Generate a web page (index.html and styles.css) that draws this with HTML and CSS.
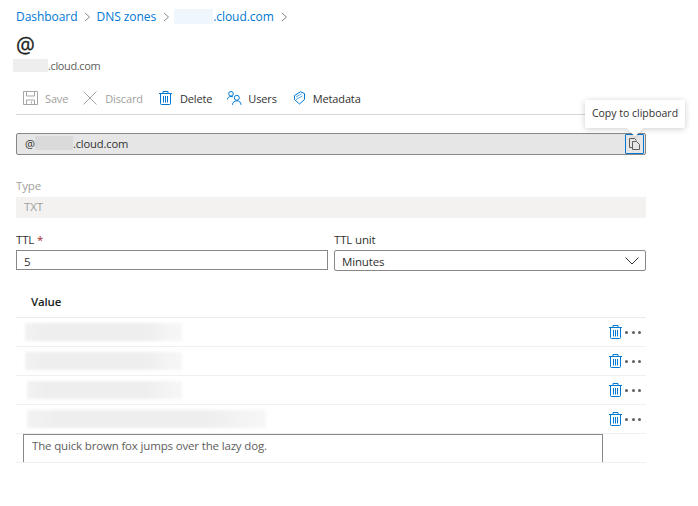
FILE: index.html
```html
<!DOCTYPE html>
<html lang="en">
<head>
<meta charset="utf-8">
<title>DNS record</title>
<link rel="stylesheet" href="styles.css">
</head>
<body>
<svg class="defs" width="0" height="0" aria-hidden="true">
  <symbol id="trash" viewBox="0 0 13 14">
    <path d="M0 2.500h13M4 2.500V.5h5v2M1.500 2.500v10a1 1 0 0 0 1 1h8a1 1 0 0 0 1-1v-10" fill="none" stroke="#0078d4" stroke-width="1"/>
    <path d="M4.500 5v6.500M6.500 5v6.500M8.500 5v6.500" fill="none" stroke="#0078d4" stroke-width="1"/>
  </symbol>
</svg>
<main class="page">
  <nav class="crumbs">
    <a>Dashboard</a><span class="chev"><svg width="7" height="10" viewBox="0 0 7 10"><path d="M1 1l4.500 4L1 9" fill="none" stroke="#8a8886"/></svg></span>
    <a>DNS zones</a><span class="chev"><svg width="7" height="10" viewBox="0 0 7 10"><path d="M1 1l4.500 4L1 9" fill="none" stroke="#8a8886"/></svg></span>
    <a class="zone"><span class="mask mask-blue"></span>.cloud.com</a><span class="chev"><svg width="7" height="10" viewBox="0 0 7 10"><path d="M1 1l4.500 4L1 9" fill="none" stroke="#8a8886"/></svg></span>
  </nav>
  <h1 class="title">@</h1>
  <div class="subtitle"><span class="mask mask-grey"></span>.cloud.com</div>

  <div class="toolbar">
    <span class="tool off save">
      <svg width="15" height="14" viewBox="0 0 15 14"><path d="M.5.5h14v13H.5zM3.500.5v4.500h8V.5M3.500 13.500V9h8v4.500M8.500 10.500v2" fill="none" stroke="#a8a6a4"/></svg>
      Save</span>
    <span class="tool off discard">
      <svg width="14" height="14" viewBox="0 0 14 14"><path d="M.5.5l13 13M13.500.5l-13 13" fill="none" stroke="#a8a6a4"/></svg>
      Discard</span>
    <span class="tool delete"><svg class="trash" width="13" height="14"><use href="#trash"/></svg>Delete</span>
    <span class="tool users">
      <svg width="15" height="14" viewBox="0 0 15 14"><g fill="none" stroke="#0078d4"><circle cx="4" cy="2.800" r="2.300"/><path d="M.5 8.500c0-2 1.500-3 3.500-3 .8 0 1.500.1 2 .4"/><circle cx="9.800" cy="6.800" r="2.500"/><path d="M5.500 13.800c0-2.500 2-4 4.300-4s4.300 1.500 4.300 4"/></g></svg>
      Users</span>
    <span class="tool meta">
      <svg width="11" height="14" viewBox="0 0 11 14"><g fill="none" stroke="#0078d4"><path d="M.5 4.500L6.500.8l4 1.700v6L5.500 13 .5 8.500z"/><path d="M2 6l5.500-3.200M2 8.500l6.500-3.700" stroke="#5ca9e4"/></g></svg>
      Metadata</span>
  </div>

  <div class="copy-field">
    <span class="copy-text">@<span class="mask mask-field"></span>.cloud.com</span>
    <span class="copy-btn">
      <svg width="11" height="12" viewBox="0 0 11 12"><path d="M3.500 9.500h-3V.5h5l2 2M3.500 3.500h4l3 3v5h-7z" fill="none" stroke="#605e5c"/></svg>
    </span>
    <div class="tooltip">Copy to clipboard</div>
  </div>

  <div class="type-label">Type</div>
  <div class="type-box">TXT</div>

  <div class="ttl-grid">
    <div>
      <label class="label">TTL <span class="req">*</span></label>
      <div class="input">5</div>
    </div>
    <div>
      <label class="label">TTL unit</label>
      <div class="select"><span class="select-value">Minutes</span>
        <svg width="14" height="8" viewBox="0 0 14 8"><path d="M.5.500L7 7 13.500.5" fill="none" stroke="#323130"/></svg>
      </div>
    </div>
  </div>

  <div class="table">
    <div class="head">Value</div>
    <div class="row">
      <span class="smear w1"></span>
      <span class="actions"><svg class="trash" width="13" height="14"><use href="#trash"/></svg><span class="dots"><i></i><i></i><i></i></span></span>
    </div>
    <div class="row">
      <span class="smear w1"></span>
      <span class="actions"><svg class="trash" width="13" height="14"><use href="#trash"/></svg><span class="dots"><i></i><i></i><i></i></span></span>
    </div>
    <div class="row">
      <span class="smear w2"></span>
      <span class="actions"><svg class="trash" width="13" height="14"><use href="#trash"/></svg><span class="dots"><i></i><i></i><i></i></span></span>
    </div>
    <div class="row">
      <span class="smear w3"></span>
      <span class="actions"><svg class="trash" width="13" height="14"><use href="#trash"/></svg><span class="dots"><i></i><i></i><i></i></span></span>
    </div>
    <div class="row editor">
      <div class="textarea">The quick brown fox jumps over the lazy dog.</div>
    </div>
  </div>
</main>
</body>
</html>
```
FILE: styles.css
```css
* { box-sizing: border-box; }
html, body { margin: 0; background: #fff; }
body {
  font-family: "Open Sans", "Noto Sans", "Liberation Sans", sans-serif;
  font-size: 11.500px;
  letter-spacing: -.16px;
  color: #323130;
  width: 698px;
  height: 506px;
  overflow: hidden;
}
.defs { position: absolute; }
.page { width: 646px; padding: 9px 0 0 16px; }

.crumbs { display: flex; align-items: center; height: 15px; font-size: 12px; letter-spacing: -.05px; color: #0078d4; }
.crumbs a { white-space: nowrap; }
.chev { display: inline-flex; margin: 0 5px 0 7px; }
.zone { display: inline-flex; align-items: center; margin-left: -1px; }

.mask { display: inline-block; }
.mask-blue { width: 39px; height: 15px; background: #eff6fc; }
.mask-grey { width: 35px; height: 13px; margin-left: -3px; background: #eeeeee; }
.mask-field { width: 38px; height: 14px; background: #dadada; }

.title { margin: 9px 0 0; font-size: 21px; line-height: 24px; font-weight: 400; color: #201f1e; -webkit-text-stroke: .3px #201f1e; }
.subtitle { display: flex; align-items: center; height: 13px; margin-top: 2px; color: #605e5c; font-size: 11px; letter-spacing: -.38px; }

.toolbar { display: flex; align-items: center; height: 38px; margin-top: 5px; padding: 5px 0 0 7px; border-bottom: 1px solid #d6d6d6; font-size: 11px; letter-spacing: -.14px; }
.tool { display: inline-flex; align-items: center; gap: 7px; white-space: nowrap; color: #323130; }
.tool.off { color: #a19f9d; }
.save { margin-right: 15px; }
.discard { margin-right: 16px; gap: 8px; }
.delete { margin-right: 15px; gap: 8px; }
.users { margin-right: 17px; gap: 6px; }
.meta { gap: 8px; }

.copy-field {
  position: relative;
  display: flex; align-items: center; justify-content: space-between;
  height: 22px; margin-top: 18px; padding: 0 1px 0 8px;
  background: #e6e6e6; border: 1px solid #8a8886; border-radius: 2px;
}
.copy-text { display: inline-flex; align-items: center; padding-bottom: 2px; font-size: 11.200px; }
.copy-btn {
  display: flex; align-items: center; justify-content: center;
  width: 19px; height: 20px; border: 1px solid #0078d4; border-radius: 1px;
}
.tooltip {
  position: absolute; left: 568px; top: -34px;
  width: 100px; height: 28px; line-height: 27px; text-align: center;
  background: #fff; font-size: 10.500px; letter-spacing: 0; color: #323130; white-space: nowrap;
  box-shadow: 0 1px 6px rgba(0,0,0,.2); border-radius: 2px;
}
.tooltip::after {
  content: ""; position: absolute; left: 44px; bottom: -6px;
  width: 12px; height: 12px; background: #fff; transform: rotate(45deg);
  box-shadow: 2px 2px 3px rgba(0,0,0,.08);
}

.type-label { margin-top: 23px; height: 15px; line-height: 15px; color: #a19f9d; }
.type-box { height: 21px; line-height: 20px; margin-top: 4px; padding-left: 8px; background: #f3f2f1; color: #a19f9d; }

.ttl-grid { display: grid; grid-template-columns: 312px 312px; column-gap: 6px; margin-top: 14px; }
.label { display: block; height: 18px; line-height: 16px; }
.req { color: #a4262c; }
.input, .select { border: 1px solid #8a8886; padding-left: 7px; }
.input { height: 20px; line-height: 21px; }
.select { display: flex; align-items: center; justify-content: space-between; padding-right: 6px; height: 21px; border-radius: 2px; }
.select-value { padding-top: 2px; }

.table { margin-top: 22px; }
.head { height: 25px; padding-left: 15px; line-height: 17px; font-weight: 600; border-bottom: 1px solid #edebe9; color: #201f1e; }
.row { display: flex; align-items: center; justify-content: space-between; height: 29px; border-bottom: 1px solid #f0f0f0; padding: 0 5px 0 9px; }
.smear { display: block; height: 18px; filter: blur(1.500px); background: linear-gradient(90deg, #f2f2f2 0, #eeeeee 12%, #eeeeee 75%, #f7f7f7 100%); }
.w1 { width: 157px; }
.w2 { width: 155px; margin-left: 2px; }
.w3 { width: 239px; margin-left: 2px; }
.actions { display: flex; align-items: center; gap: 3px; }
.trash { display: block; }
.dots { display: flex; gap: 3.500px; }
.dots i { display: block; width: 3px; height: 3px; border-radius: 50%; background: #605e5c; }
.editor { padding: 0; align-items: flex-start; }
.textarea {
  width: 580px; height: 28px; margin-left: 7px; padding: 3px 0 0 8px;
  border: 1px solid #8a8886; border-bottom: 0; color: #605e5c;
}
```
